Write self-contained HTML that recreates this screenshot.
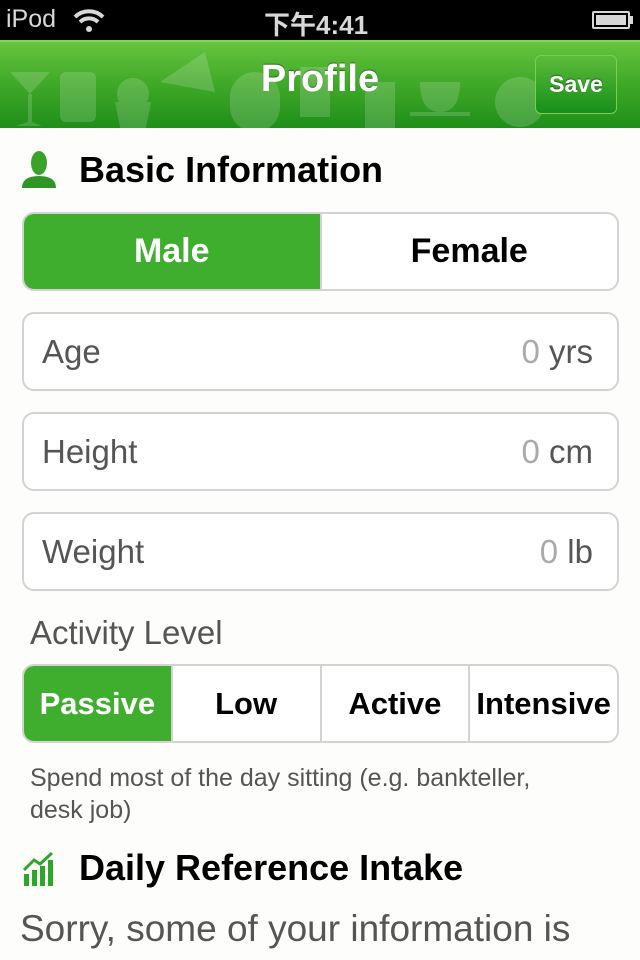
<!DOCTYPE html>
<html><head><meta charset="utf-8"><style>
*{margin:0;padding:0;box-sizing:border-box}
body{width:640px;height:960px;overflow:hidden;background:#fdfdfb;font-family:"Liberation Sans","Noto Sans CJK SC",sans-serif;position:relative}
.abs{position:absolute}
.sb{left:0;top:0;width:640px;height:40px;background:#000;color:#d8d8d8;font-size:25px}
.nav{left:0;top:40px;width:640px;height:88px;background:linear-gradient(#66c43e,#3fa828 50%,#1f8f1a);border-top:2px solid #86d45a}
.title{left:0;width:640px;top:58px;text-align:center;color:#fff;font-weight:bold;font-size:38px;text-shadow:0 -1px 1px rgba(0,0,0,.4)}
.save{left:535px;top:55px;width:82px;height:59px;border-radius:6px;border:1px solid #7ad04e;background:linear-gradient(#5cba3a,#16901a);color:#fff;font-weight:bold;font-size:23px;text-align:center;line-height:57px;text-shadow:0 -1px 1px rgba(0,0,0,.4)}
.h{font-weight:bold;font-size:36px;color:#000}
.box{left:22px;width:597px;height:79px;border:2px solid #d3d3d3;border-radius:12px;background:#fff}
.fl{left:18px;top:19px;font-size:33px;color:#555}
.fr{right:24px;top:19px;font-size:33px;color:#555}
.fr span{color:#aaa}
.seg{display:flex;overflow:hidden}
.seg div{flex:1;text-align:center;font-weight:bold;color:#000;border-left:2px solid #d3d3d3;display:flex;align-items:center;justify-content:center}
.seg div.on{background:#3fae2e;color:#fff;border-left:none}
</style></head><body>
<div class="abs sb">
<span class="abs" style="left:6px;top:5px">iPod</span>
<svg class="abs" style="left:72px;top:8px" width="34" height="24" viewBox="0 0 34 24"><path d="M3 9 A20 20 0 0 1 31 9" stroke="#d8d8d8" stroke-width="4" fill="none"/><path d="M8 14 A13 13 0 0 1 26 14" stroke="#d8d8d8" stroke-width="4" fill="none"/><circle cx="17" cy="21" r="3" fill="#d8d8d8"/></svg>
<span class="abs" style="left:264px;top:5px;font-weight:bold;font-size:26px">下午4:41</span>
<div class="abs" style="left:592px;top:11px;width:38px;height:18px;border:2px solid #d8d8d8;border-radius:2px;padding:2px"><div style="background:#d8d8d8;height:100%"></div></div>
<div class="abs" style="left:630px;top:16px;width:3px;height:8px;background:#d8d8d8"></div>
</div>
<div class="abs nav"></div>
<svg class="abs" style="left:0;top:42px" width="640" height="86" opacity=".16" fill="#fff">
<path d="M10 30 L50 30 L30 52 Z M28 52 L28 80 L16 84 L42 84 L32 80 L32 52"/>
<rect x="60" y="30" width="36" height="50" rx="6"/><path d="M115 60 h36 l-6 30 h-24z"/><circle cx="133" cy="52" r="16"/>
<path d="M160 40 L205 10 L215 50z"/><rect x="230" y="30" width="50" height="60" rx="25"/>
<rect x="300" y="25" width="30" height="50"/><rect x="365" y="40" width="30" height="50"/>
<path d="M420 40 h40 q0 30 -20 30 q-20 0 -20 -30z"/><rect x="410" y="70" width="60" height="4"/>
<circle cx="520" cy="60" r="25"/>
</svg>
<div class="abs title">Profile</div>
<div class="abs save">Save</div>

<svg class="abs" style="left:20px;top:150px" width="38" height="38" viewBox="0 0 38 38"><ellipse cx="19" cy="13" rx="8" ry="12" fill="#3aa22b"/><path d="M2 38 Q2 26 19 26 Q36 26 36 38z" fill="#2f9625"/></svg>
<div class="abs h" style="left:79px;top:149px">Basic Information</div>

<div class="abs box seg" style="top:212px;font-size:34px"><div class="on">Male</div><div>Female</div></div>
<div class="abs box" style="top:312px"><span class="abs fl">Age</span><span class="abs fr"><span>0</span> yrs</span></div>
<div class="abs box" style="top:412px"><span class="abs fl">Height</span><span class="abs fr"><span>0</span> cm</span></div>
<div class="abs box" style="top:512px"><span class="abs fl">Weight</span><span class="abs fr"><span>0</span> lb</span></div>

<div class="abs" style="left:30px;top:614px;font-size:33px;color:#555">Activity Level</div>
<div class="abs box seg" style="top:664px;font-size:31px"><div class="on">Passive</div><div>Low</div><div>Active</div><div>Intensive</div></div>

<div class="abs" style="left:30px;top:762px;font-size:25px;color:#555;line-height:32px;width:540px">Spend most of the day sitting (e.g. bankteller, desk job)</div>

<svg class="abs" style="left:22px;top:850px" width="34" height="36" viewBox="0 0 34 36"><g fill="#2fa52a"><rect x="2" y="24" width="5" height="12"/><rect x="10" y="20" width="5" height="16"/><rect x="18" y="16" width="5" height="20"/><rect x="26" y="10" width="5" height="26"/></g><path d="M2 20 L12 10 L18 14 L30 3" stroke="#2fa52a" stroke-width="3" fill="none"/></svg>
<div class="abs h" style="left:79px;top:847px">Daily Reference Intake</div>
<div class="abs" style="left:20px;top:908px;font-size:37px;color:#555">Sorry, some of your information is</div>
</body></html>
